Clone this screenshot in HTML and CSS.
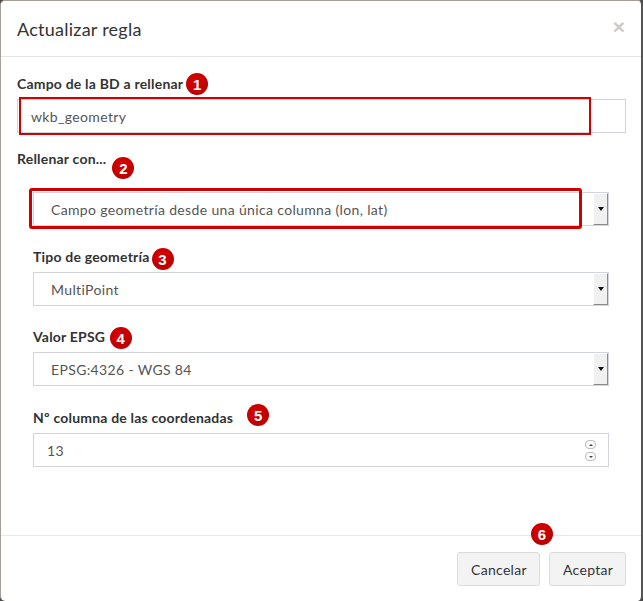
FILE: index.html
```html
<!DOCTYPE html>
<html lang="es">
<head>
<meta charset="utf-8">
<title>Actualizar regla</title>
<link rel="stylesheet" href="styles.css">
</head>
<body>
<div class="modal">
  <div class="modal-header">
    <h4 class="modal-title">Actualizar regla</h4>
    <span class="close">×</span>
  </div>
  <div class="modal-body">
    <div class="form-group">
      <label class="lbl">Campo de la BD a rellenar<span class="badge b1">1</span></label>
      <div class="field-wrap">
        <div class="input">wkb_geometry</div>
        <div class="mark mark-thin"></div>
      </div>
    </div>
    <div class="form-group">
      <label class="lbl">Rellenar con...<span class="badge b2">2</span></label>
      <div class="nested">
        <div class="field-wrap sel-first">
          <div class="select"><span class="sel-text">Campo geometría desde una única columna (lon, lat)</span><span class="arrow"></span></div>
          <div class="mark mark-thick"></div>
        </div>
        <div class="sub-group">
          <label class="lbl">Tipo de geometría<span class="badge b3">3</span></label>
          <div class="select"><span class="sel-text">MultiPoint</span><span class="arrow"></span></div>
        </div>
        <div class="sub-group">
          <label class="lbl">Valor EPSG <span class="badge b4">4</span></label>
          <div class="select"><span class="sel-text">EPSG:4326 - WGS 84</span><span class="arrow"></span></div>
        </div>
        <div class="sub-group last">
          <label class="lbl">Nº columna de las coordenadas<span class="badge b5">5</span></label>
          <div class="input num"><span class="sel-text">13</span>
            <span class="spin"><span class="spin-btn up"></span><span class="spin-btn down"></span></span>
          </div>
        </div>
      </div>
    </div>
  </div>
  <div class="modal-footer">
    <span class="badge b6">6</span>
    <button class="btn">Cancelar</button>
    <button class="btn">Aceptar</button>
  </div>
</div>
</body>
</html>
```

FILE: styles.css
```css
html, body {
  margin: 0;
  padding: 0;
  height: 100%;
  background: #4a4a4a;
}
body {
  font-family: "Lato", "Liberation Sans", sans-serif;
  font-size: 14px;
  color: #333;
}
.modal {
  box-sizing: border-box;
  width: 643px;
  height: 601px;
  background: #fff;
  border-left: 1px solid #a59e99;
  border-top: 1px solid #a59e99;
  border-right: 2px solid #555;
  border-radius: 5px;
  display: flex;
  flex-direction: column;
  overflow: hidden;
}
.modal-header {
  height: 56px;
  box-sizing: border-box;
  padding: 15px 15px 15px 16px;
  border-bottom: 1px solid #e5e5e5;
  display: flex;
  justify-content: space-between;
  align-items: flex-start;
}
.modal-title {
  margin: 0;
  font-size: 18px;
  font-weight: normal;
  line-height: 26px;
  letter-spacing: 0.25px;
  color: #333;
}
.close {
  font-family: "Liberation Sans", sans-serif;
  font-size: 21px;
  font-weight: bold;
  line-height: 21px;
  color: #cbcbcb;
  margin-top: 0px;
  margin-right: 1px;
}
.modal-body {
  flex: 1;
  padding: 17px 15px 0 16px;
}
.form-group {
  margin-bottom: 16px;
}
.lbl {
  display: block;
  font-weight: bold;
  line-height: 20px;
  height: 20px;
  margin-bottom: 5px;
  letter-spacing: 0.2px;
  color: #333;
}
.field-wrap {
  position: relative;
}
.input, .select {
  box-sizing: border-box;
  height: 34px;
  border: 1px solid #d2d4dd;
  background: #fff;
  color: #555;
  font-size: 14px;
  letter-spacing: 0.35px;
  display: flex;
  align-items: center;
}
.input {
  padding-left: 13px;
}
.select {
  padding-left: 17px;
}
.sel-text {
  flex: 1;
}
.arrow {
  align-self: stretch;
  width: 15px;
  box-sizing: border-box;
  background: #f0f0f0;
  border-left: 1px solid #fff;
  border-top: 1px solid #fff;
  border-right: 1px solid #8a8a8a;
  border-bottom: 1px solid #8a8a8a;
  position: relative;
}
.arrow::after {
  content: "";
  position: absolute;
  left: 4px;
  top: 13px;
  border-left: 3px solid transparent;
  border-right: 3px solid transparent;
  border-top: 4px solid #111;
}
.mark {
  position: absolute;
  box-sizing: border-box;
  pointer-events: none;
}
.mark-thin {
  left: 2px;
  top: -2px;
  width: 572px;
  height: 38px;
  border: 2px solid #d40000;
}
.nested {
  padding: 18px 17px 0 16px;
}
.sel-first .mark-thick {
  left: -4px;
  top: -4px;
  width: 553px;
  height: 41px;
  border: 3px solid #d00000;
  border-radius: 3px;
}
.sub-group {
  margin-top: 21px;
}
.sub-group.last {
  margin-top: 22px;
}
.num {
  padding-left: 13px;
  padding-right: 12px;
}
.spin {
  display: flex;
  flex-direction: column;
  gap: 3px;
}
.spin-btn {
  width: 11px;
  height: 9px;
  box-sizing: border-box;
  border: 1px solid #bdbdbd;
  border-radius: 4px;
  background: #fafafa;
  position: relative;
}
.spin-btn::after {
  content: "";
  position: absolute;
  left: 3px;
  top: 3px;
  border-left: 2px solid transparent;
  border-right: 2px solid transparent;
}
.spin-btn.up::after { border-bottom: 2px solid #444; }
.spin-btn.down::after { border-top: 2px solid #444; }
.badge {
  display: inline-flex;
  align-items: center;
  justify-content: center;
  width: 22px;
  height: 22px;
  margin-top: -4px;
  margin-bottom: -4px;
  border-radius: 50%;
  background: radial-gradient(circle at 40% 35%, #d80000, #b00000);
  color: #fff;
  font-family: "Liberation Sans", sans-serif;
  font-weight: bold;
  font-size: 15px;
  letter-spacing: 0;
  line-height: 1;
  vertical-align: middle;
  position: relative;
}
.b1 { margin-left: 3px; top: -1px; }
.b2 { margin-left: 6px; top: 8px; }
.b3 { margin-left: 2px; top: 1px; }
.b4 { margin-left: 1px; top: 0; }
.b5 { margin-left: 14px; top: -4px; }
.modal-footer {
  position: relative;
  border-top: 1px solid #e8e8e8;
  padding: 16px 15px 15px;
  display: flex;
  justify-content: flex-end;
  gap: 9px;
}
.b6 {
  position: absolute;
  left: 530px;
  top: -13px;
  margin: 0;
}
.btn {
  font-family: inherit;
  font-size: 14px;
  letter-spacing: 0.3px;
  color: #333;
  background: #f3f3f3;
  border: 1px solid #dcdcdc;
  border-radius: 3px;
  height: 34px;
  padding: 0 13px;
}
.btn:first-of-type { width: 83px; }
.btn:last-of-type { width: 77px; }
```
